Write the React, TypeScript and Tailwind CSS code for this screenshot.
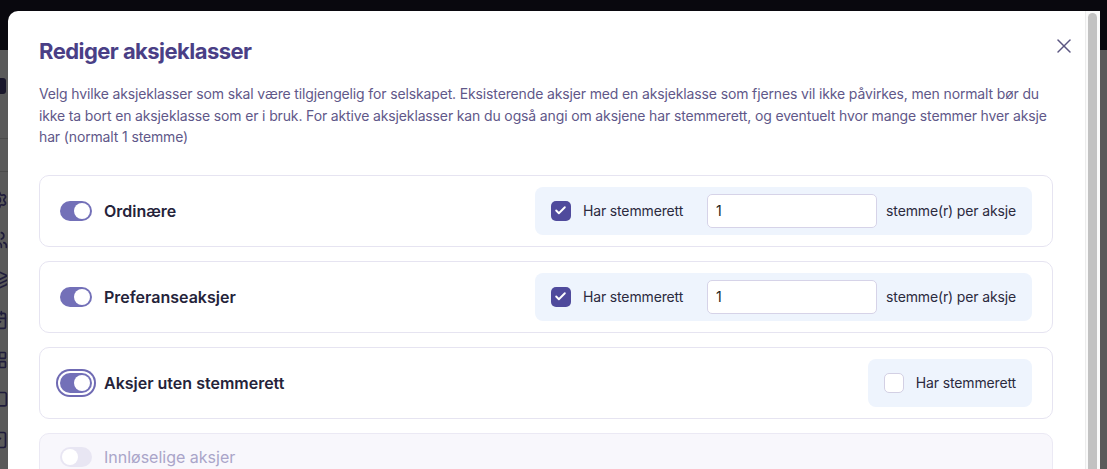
import { X, Check, Settings, Users, Layers, CalendarCheck, LayoutGrid, MessageSquare, SquareCheck } from 'lucide-react';

interface ShareClass {
    name: string;
    enabled: boolean;
    voting?: boolean;
    votes?: string;
    focused?: boolean;
    disabled?: boolean;
}

const CLASSES: ShareClass[] = [
    { name: 'Ordinære', enabled: true, voting: true, votes: '1' },
    { name: 'Preferanseaksjer', enabled: true, voting: true, votes: '1' },
    { name: 'Aksjer uten stemmerett', enabled: true, voting: false, focused: true },
    { name: 'Innløselige aksjer', enabled: false, disabled: true },
];

const SIDEBAR_ICONS = [Settings, Users, Layers, CalendarCheck, LayoutGrid, MessageSquare, SquareCheck];

function Toggle({ on, focused }: { on: boolean; focused?: boolean }) {
    return (
        <span
            className={`flex h-5 w-8 shrink-0 items-center rounded-full p-0.5 ${on ? 'justify-end bg-[#7370b8]' : 'justify-start bg-[#e8e6f3]'} ${focused ? 'ring-2 ring-[#6f6ab3] ring-offset-2' : ''}`}
        >
            <span className="h-4 w-4 rounded-full bg-white" />
        </span>
    );
}

function VoteBox({ voting, votes }: { voting?: boolean; votes?: string }) {
    return (
        <div className="flex h-12 items-center rounded-lg bg-[#eef4fd] px-4 text-sm tracking-[-0.01em] text-[#2b2a3e]">
            <label className="flex items-center gap-3">
                {voting ? (
                    <span className="flex h-5 w-5 items-center justify-center rounded-[5px] bg-[#4f4a9c]">
                        <Check size={13} strokeWidth={3.5} className="text-white" />
                    </span>
                ) : (
                    <span className="h-5 w-5 rounded-[5px] border border-[#d3d0e4] bg-white" />
                )}
                <span>Har stemmerett</span>
            </label>
            {voting && (
                <>
                    <input
                        readOnly
                        value={votes}
                        className="ml-6 h-[34px] w-[170px] rounded-[5px] border border-[#d6d3e8] bg-white pl-2 text-sm text-[#222] outline-none"
                    />
                    <span className="ml-[9px]">stemme(r) per aksje</span>
                </>
            )}
        </div>
    );
}

export default function App() {
    return (
        <div className="relative h-[469px] w-[1107px] overflow-hidden bg-[#5a5a5a] font-['Inter',sans-serif]">
            {/* dimmed page underneath */}
            <div className="h-[50px] bg-[#09080e]" />
            <div className="flex w-2 flex-col">
                <div className="mt-[28px] h-[16px] w-[6px] rounded-r-[3px] bg-[#19172b]" />
                <div className="mt-[44px] h-px w-2 bg-[#4c4c4c]" />
                <div className="mt-8 h-px w-2 bg-[#4c4c4c]" />
                <div className="ml-[-12px] mt-[18px] flex flex-col gap-5 text-[#1f1c3c]">
                    {SIDEBAR_ICONS.map((Icon, i) => (
                        <Icon key={i} size={20} strokeWidth={2} />
                    ))}
                </div>
            </div>

            {/* modal */}
            <div className="absolute bottom-0 left-2 right-[7px] top-[11px] flex overflow-hidden rounded-tl-[10px] bg-white">
                <div className="relative flex-1 pl-[31px] pr-8 pt-6">
                    <h2 className="text-[22px] font-bold leading-8 tracking-tight text-[#4a3f86]">Rediger aksjeklasser</h2>
                    <button className="absolute right-[9px] top-[23px] text-[#5b5681]">
                        <X size={24} strokeWidth={1.5} />
                    </button>
                    <p className="mt-[16px] text-sm leading-[21.5px] tracking-[-0.01em] text-[#5f5889]">
                        Velg hvilke aksjeklasser som skal være tilgjengelig for selskapet. Eksisterende aksjer med en aksjeklasse som fjernes vil ikke påvirkes, men normalt bør du ikke ta bort en aksjeklasse som er i bruk. For aktive aksjeklasser kan du også angi om aksjene har stemmerett, og eventuelt hvor mange stemmer hver aksje har (normalt 1 stemme)
                    </p>

                    <div className="mt-[27px] flex flex-col gap-[14px]">
                        {CLASSES.map((c) =>
                            c.disabled ? (
                                <div key={c.name} className="flex h-[72px] items-start gap-3 rounded-[10px] border border-[#ebe9f4] bg-[#f8f7fc] px-5 pt-[13px]">
                                    <Toggle on={false} />
                                    <span className="text-base leading-5 text-[#aaa5c9]">{c.name}</span>
                                </div>
                            ) : (
                                <div
                                    key={c.name}
                                    className="flex h-[72px] items-center justify-between rounded-[10px] border border-[#e6e4f1] bg-white px-5"
                                >
                                    <div className="flex items-center gap-3">
                                        <Toggle on={c.enabled} focused={c.focused} />
                                        <span className="text-base font-semibold text-[#25233a]">{c.name}</span>
                                    </div>
                                    <VoteBox voting={c.voting} votes={c.votes} />
                                </div>
                            )
                        )}
                    </div>
                </div>

                {/* scrollbar */}
                <div className="w-[15px] shrink-0 border-l border-[#ececec] bg-[#fafafa] pl-[2px] pt-[2px]">
                    <div className="h-[480px] w-[9px] rounded-full bg-[#c2c2c2]" />
                </div>
            </div>
        </div>
    );
}
